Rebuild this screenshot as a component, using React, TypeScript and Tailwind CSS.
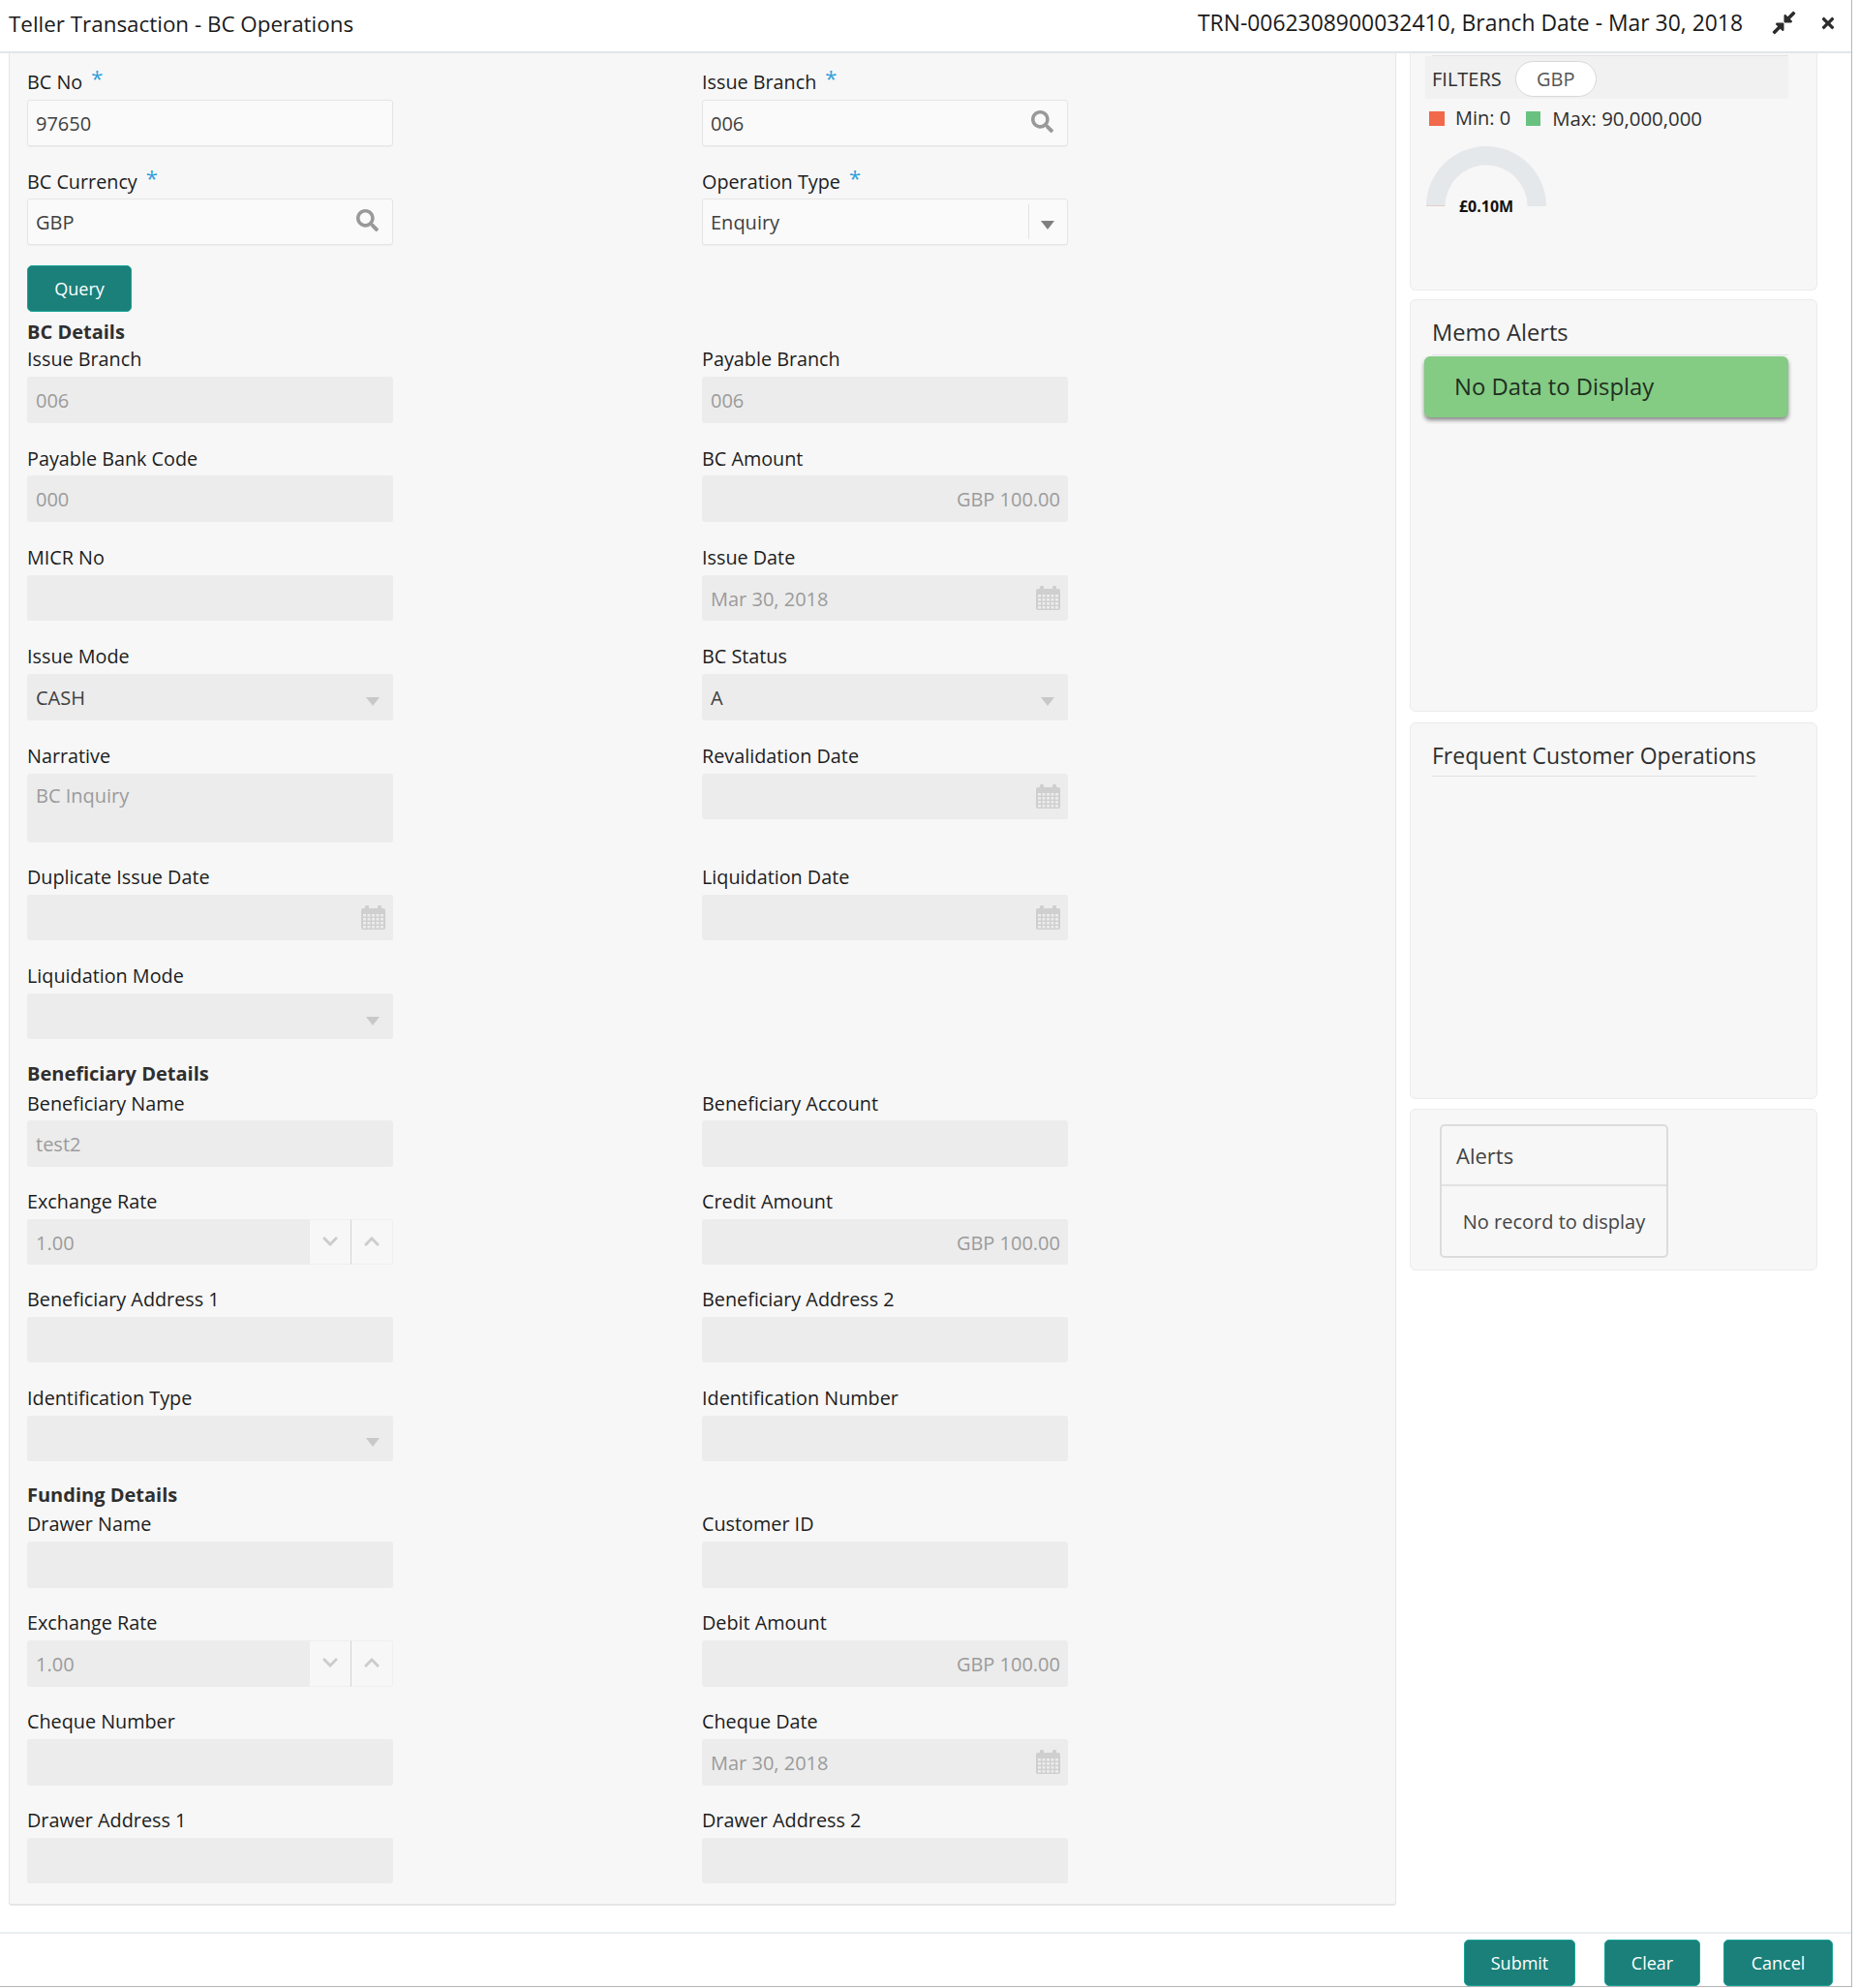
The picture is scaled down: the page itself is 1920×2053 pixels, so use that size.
import { FaCompressAlt, FaTimes, FaSearch, FaChevronDown, FaChevronUp } from "react-icons/fa";
import type { ReactNode } from "react";

type FieldProps = {
  label?: string;
  req?: boolean;
  value?: string;
  kind?: "text" | "search" | "select" | "date" | "spinner" | "amount";
  active?: boolean;
  dark?: boolean;
  tall?: boolean;
  first?: boolean;
};

function CalendarIcon() {
  return (
    <svg width="25" height="25" viewBox="0 0 25 25" className="shrink-0">
      <rect x="0" y="3" width="25" height="22" rx="2" fill="#cfcfcf" />
      <rect x="4" y="0" width="4" height="6" rx="1" fill="#cfcfcf" />
      <rect x="17" y="0" width="4" height="6" rx="1" fill="#cfcfcf" />
      {[9, 13, 17, 21].map((y) =>
        [2, 6.5, 11, 15.5, 20].map((x) => (
          <rect key={`${x}-${y}`} x={x} y={y} width="3" height="2.6" fill="#ececec" />
        ))
      )}
    </svg>
  );
}

function Arrow({ active }: { active?: boolean }) {
  return (
    <div
      className={`w-0 h-0 border-l-[7px] border-r-[7px] border-t-[9px] border-l-transparent border-r-transparent ${
        active ? "border-t-[#7f7f7f]" : "border-t-[#c8c8c8]"
      }`}
    />
  );
}

function Field({ label, req, value, kind = "text", active, dark, tall, first }: FieldProps) {
  if (!label) return <div />;
  const box = active
    ? "bg-[#fafafa] border border-[#e5e5e5] shadow-[0_1px_1px_#eeeeee] pl-[8px]"
    : "bg-[#ececec] pl-[9px]";
  const color = active || dark ? "text-[#3f3f3f]" : "text-[#9b9b9b]";
  const labelBox = first ? "h-[26px] mb-[5px]" : req ? "h-6 mb-[5px]" : "h-[22px] mb-[7px]";

  return (
    <div>
      <div className={`flex items-center text-[#1c1c1c] text-[19.8px] ${labelBox}`}>
        {label}
        {req && <span className="text-[#2f9fdc] ml-[9px] -mt-[10px] text-[22px] leading-none">*</span>}
      </div>
      {kind === "spinner" ? (
        <div className="h-[47.5px] flex rounded-[3px] overflow-hidden">
          <div className={`w-[292px] bg-[#ececec] pl-[9px] pt-[2px] flex items-center ${color}`}>{value}</div>
          <div className="w-[43px] pb-[2px] flex items-center justify-center bg-[#f7f7f7] border-r border-[#d4d4d4] border-y border-y-[#efefef] text-[#cccccc]">
            <FaChevronDown size={18} />
          </div>
          <div className="w-[43px] pb-[2px] flex items-center justify-center bg-[#f7f7f7] border border-l-0 border-[#efefef] text-[#cccccc]">
            <FaChevronUp size={18} />
          </div>
        </div>
      ) : (
        <div
          className={`${tall ? "h-[71px] items-start pt-[6px]" : "h-[47.5px] items-center"} flex justify-between rounded-[3px] pr-[8px] ${box} ${color}`}
        >
          <span className={`${active ? "pt-[3px]" : "pt-[2px]"} ${kind === "amount" ? "ml-auto" : ""}`}>{value}</span>
          {kind === "search" && <FaSearch size={23} className="text-[#999999] -mt-[3px] mr-[6px]" />}
          {kind === "date" && <CalendarIcon />}
          {kind === "select" && active && (
            <div className="flex items-center h-[36px] mr-[5px]">
              <div className="w-px h-full bg-[#e3e3e3] mr-[12px]" />
              <div className="mt-[8px]">
                <Arrow active />
              </div>
            </div>
          )}
          {kind === "select" && !active && (
            <div className="mt-[9px] mr-[6px]">
              <Arrow />
            </div>
          )}
        </div>
      )}
    </div>
  );
}

function Row({ h = "h-[102.4px]", children }: { h?: string; children: ReactNode }) {
  return <div className={`grid grid-cols-[378px_378px] gap-x-[319px] ${h}`}>{children}</div>;
}

function Heading({ children, className }: { children: ReactNode; className: string }) {
  return <div className={`h-5 flex items-center font-bold text-[#2f2f2f] ${className}`}>{children}</div>;
}

function Card({ className, children }: { className: string; children?: ReactNode }) {
  return <div className={`bg-[#f7f7f7] border border-[#ebebeb] rounded-[6px] ${className}`}>{children}</div>;
}

function TealButton({ children, className }: { children: ReactNode; className: string }) {
  return (
    <button className={`h-[48px] bg-[#1b807a] border border-[#17a398] rounded-[5px] text-white text-[18px] ${className}`}>
      {children}
    </button>
  );
}

export default function App() {
  return (
    <div className="w-[1920px] h-[2053px] bg-white text-[20px] font-['Open_Sans','Noto_Sans',sans-serif] overflow-hidden">
      <div className="w-[1913px] h-[2052px] border-r border-b border-[#b5b5b5] flex flex-col">
        <header className="h-[55px] shrink-0 border-b-2 border-[#e2e6e9] flex items-center pl-[9px] pr-[15px] pb-[4px] text-[#1a1a1a]">
          <div className="flex-1 text-[22.4px]">Teller Transaction - BC Operations</div>
          <div className="text-[22.9px]">TRN-0062308900032410, Branch Date - Mar 30, 2018</div>
          <FaCompressAlt size={27} className="ml-[29px] -mt-[2px] text-[#2c2c2c]" />
          <FaTimes size={18} className="ml-[23px] -mt-[2px] text-[#2c2c2c]" />
        </header>

        <div className="h-[1940px] flex">
          <main className="ml-[9px] w-[1433px] h-[1913px] bg-[#f7f7f7] border-x border-b-2 border-[#e6e6e6] rounded-b-[3px] pt-[17px] pl-[18px]">
            <Row h="h-[104px]">
              <Field first label="BC No" req value="97650" active />
              <Field first label="Issue Branch" req value="006" kind="search" active />
            </Row>
            <Row h="h-[98px]">
              <Field label="BC Currency" req value="GBP" kind="search" active />
              <Field label="Operation Type" req value="Enquiry" kind="select" active />
            </Row>
            <TealButton className="w-[108px]">Query</TealButton>

            <Heading className="mt-[11px] mb-[7px]">BC Details</Heading>
            <Row>
              <Field label="Issue Branch" value="006" />
              <Field label="Payable Branch" value="006" />
            </Row>
            <Row>
              <Field label="Payable Bank Code" value="000" />
              <Field label="BC Amount" value="GBP 100.00" kind="amount" />
            </Row>
            <Row>
              <Field label="MICR No" />
              <Field label="Issue Date" value="Mar 30, 2018" kind="date" />
            </Row>
            <Row>
              <Field label="Issue Mode" value="CASH" kind="select" dark />
              <Field label="BC Status" value="A" kind="select" dark />
            </Row>
            <Row h="h-[125px]">
              <Field label="Narrative" value="BC Inquiry" tall />
              <Field label="Revalidation Date" kind="date" />
            </Row>
            <Row>
              <Field label="Duplicate Issue Date" kind="date" />
              <Field label="Liquidation Date" kind="date" />
            </Row>
            <Row>
              <Field label="Liquidation Mode" kind="select" />
              <div />
            </Row>

            <Heading className="mb-[9px]">Beneficiary Details</Heading>
            <Row h="h-[101.6px]">
              <Field label="Beneficiary Name" value="test2" />
              <Field label="Beneficiary Account" />
            </Row>
            <Row h="h-[101px]">
              <Field label="Exchange Rate" value="1.00" kind="spinner" />
              <Field label="Credit Amount" value="GBP 100.00" kind="amount" />
            </Row>
            <Row h="h-[101.6px]">
              <Field label="Beneficiary Address 1" />
              <Field label="Beneficiary Address 2" />
            </Row>
            <Row h="h-[101.6px]">
              <Field label="Identification Type" kind="select" />
              <Field label="Identification Number" />
            </Row>

            <Heading className="mb-[9px]">Funding Details</Heading>
            <Row h="h-[102px]">
              <Field label="Drawer Name" />
              <Field label="Customer ID" />
            </Row>
            <Row h="h-[102px]">
              <Field label="Exchange Rate" value="1.00" kind="spinner" />
              <Field label="Debit Amount" value="GBP 100.00" kind="amount" />
            </Row>
            <Row h="h-[101.6px]">
              <Field label="Cheque Number" />
              <Field label="Cheque Date" value="Mar 30, 2018" kind="date" />
            </Row>
            <Row h="h-[102px]">
              <Field label="Drawer Address 1" />
              <Field label="Drawer Address 2" />
            </Row>
          </main>

          <aside className="ml-[14px] w-[421px] flex flex-col">
            <Card className="h-[245px] rounded-t-none border-t-0 pl-[15px] pr-[29px] text-[#2f2f2f]">
              <div className="ml-[7px] mt-[2px] h-[1px] bg-[#dfe2e5]" />
              <div className="h-[44px] bg-[#f1f1f1] flex items-center pl-[7px]">
                <span className="pt-[3px]">FILTERS</span>
                <span className="ml-[14px] w-[84px] h-[37px] mt-[3px] rounded-full bg-white border border-[#d8d8d8] flex items-center justify-center text-[#555555]">
                  GBP
                </span>
              </div>
              <div className="flex items-center h-[18px] mt-[11px] ml-[4px]">
                <div className="w-[16px] h-[15px] bg-[#f2684a]" />
                <span className="ml-[11px]">Min: 0</span>
                <div className="ml-[16px] w-[15px] h-[15px] bg-[#69c180]" />
                <span className="ml-[12px] text-[20.4px]">Max: 90,000,000</span>
              </div>
              <svg width="126" height="80" viewBox="0 0 126 80" className="mt-[20px]">
                <path d="M1 62 A62 62 0 0 1 125 62 L105.5 62 A42.5 42.5 0 0 0 20.5 62 Z" fill="#e5e8eb" />
                <rect x="1" y="61" width="19" height="1" fill="#e8cccc" />
                <text x="63" y="68" textAnchor="middle" fontSize="16" fontWeight="700" fill="#111111" fontFamily="Open Sans">
                  £0.10M
                </text>
              </svg>
            </Card>

            <Card className="h-[426px] mt-[9px] pl-[14px] pr-[29px]">
              <div className="ml-[8px] pt-[18px] h-[57px] border-b border-[#dfe2e5] text-[23.7px] leading-[30px] text-[#2f2f2f]">
                Memo Alerts
              </div>
              <div className="mt-[1px] h-[63px] bg-[#84cb84] rounded-[6px] shadow-[0_3px_4px_#8a8a8a] flex items-center pl-[31px] text-[23.8px] text-[#1f2f1f]">
                No Data to Display
              </div>
            </Card>

            <Card className="h-[389px] mt-[11px] pl-[22px]">
              <div className="inline-block pt-[17px] pb-[5px] border-b border-[#dfe2e5] text-[23px] leading-[32px] text-[#2f2f2f]">
                Frequent Customer Operations
              </div>
            </Card>

            <Card className="h-[167px] mt-[10px] pl-[30px] pt-[15px]">
              <div className="w-[236px] h-[138px] border-2 border-[#dcdcdc] rounded-[5px] text-[#444444]">
                <div className="h-[62px] flex items-center pl-[15px] border-b-2 border-[#e2e2e2] text-[22px]">Alerts</div>
                <div className="h-[72px] pt-[1px] flex items-center justify-center">No record to display</div>
              </div>
            </Card>
          </aside>
        </div>

        <footer className="flex-1 border-t-2 border-[#e9edf0] flex justify-end items-end pr-[19px]">
          <TealButton className="w-[115px]">Submit</TealButton>
          <TealButton className="w-[99px] ml-[30px]">Clear</TealButton>
          <TealButton className="w-[113px] ml-[24px]">Cancel</TealButton>
        </footer>
      </div>
    </div>
  );
}
